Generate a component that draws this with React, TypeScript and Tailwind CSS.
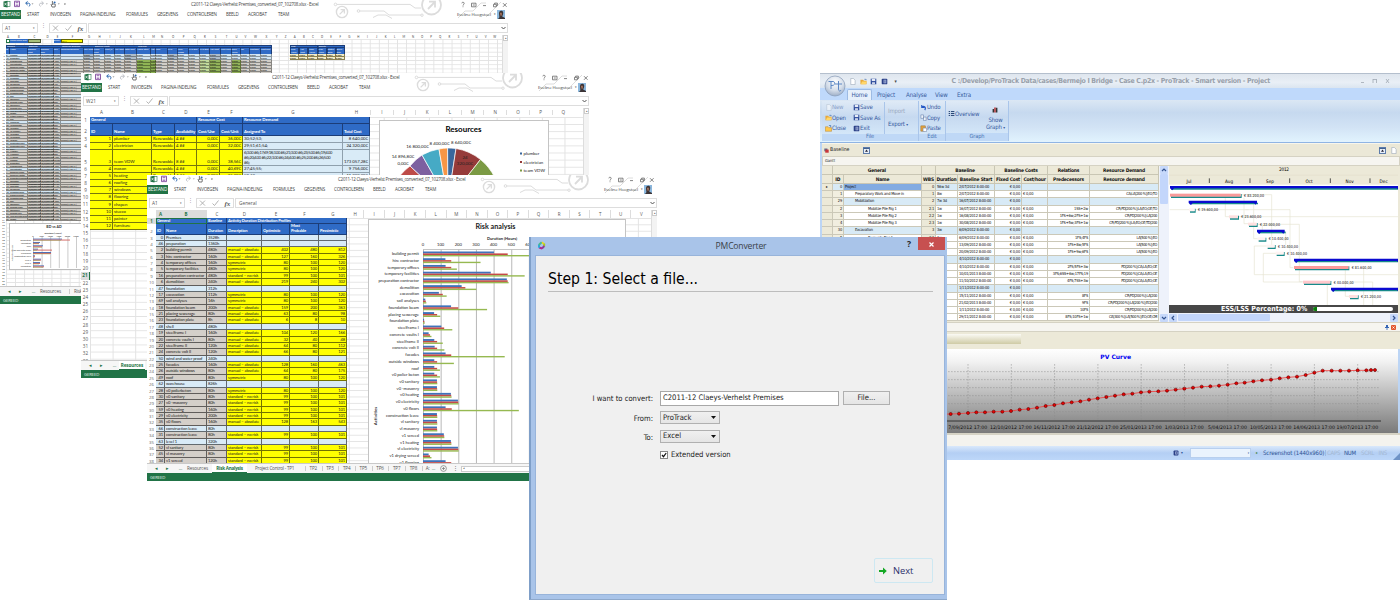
import React from "react";
import clsx from "clsx";

/* ------------------------------------------------------------------ */
/* Shared project data                                                 */
/* ------------------------------------------------------------------ */

type Activity = [id: string, name: string, hours: string, kind?: string, a?: string, b?: string, c?: string];

const ACTIVITIES: Activity[] = [
  ["0", "Premises", "3528h"],
  ["46", "preparation", "1360h"],
  ["2", "building permit", "480h", "manual – absolute", "402", "480", "812"],
  ["3", "hire contractor", "160h", "manual – absolute", "127", "160", "326"],
  ["4", "temporary offices", "160h", "symmetric", "80", "100", "120"],
  ["5", "temporary facilities", "480h", "symmetric", "80", "100", "120"],
  ["16", "preparation contractor", "480h", "standard – no risk", "99", "100", "101"],
  ["6", "demolition", "240h", "manual – absolute", "219", "240", "302"],
  ["47", "foundation", "312h"],
  ["17", "excavation", "112h", "symmetric", "80", "100", "120"],
  ["69", "soil analyses", "16h", "symmetric", "80", "100", "120"],
  ["18", "foundation beam", "200h", "manual – absolute", "159", "200", "363"],
  ["21", "placing sewerage", "80h", "manual – absolute", "63", "80", "98"],
  ["23", "foundation plate", "8h", "manual – absolute", "6", "8", "10"],
  ["48", "shell", "480h"],
  ["19", "steelframe I", "160h", "manual – absolute", "104", "120", "166"],
  ["20", "concrete vaults I", "80h", "manual – absolute", "32", "40", "48"],
  ["22", "steelframe II", "120h", "manual – absolute", "64", "80", "112"],
  ["24", "concrete volt II", "120h", "manual – absolute", "66", "80", "121"],
  ["50", "wind and water proof", "240h"],
  ["25", "facades", "160h", "manual – absolute", "128", "160", "463"],
  ["26", "outside windows", "80h", "manual – absolute", "64", "80", "175"],
  ["49", "roof", "80h", "symmetric", "80", "100", "120"],
  ["62", "warehouse", "826h"],
  ["28", "v0 polierbeton", "80h", "symmetric", "80", "100", "120"],
  ["30", "v0 sanitary", "80h", "standard – no risk", "99", "100", "101"],
  ["27", "v0 -masonry", "80h", "standard – no risk", "99", "100", "101"],
  ["59", "v0 heating", "160h", "standard – no risk", "99", "100", "101"],
  ["29", "v0 electricity", "200h", "standard – no risk", "99", "100", "101"],
  ["35", "v0 floors", "160h", "manual – absolute", "128", "163", "543"],
  ["66", "construction leave", "80h"],
  ["31", "construction leave", "80h", "standard – no risk", "99", "100", "101"],
  ["63", "level 1", "320h"],
  ["52", "vl sanitary", "80h", "standard – no risk", "99", "100", "101"],
  ["45", "vl masonry", "80h", "standard – no risk", "99", "100", "101"],
  ["34", "v1 screed", "120h", "standard – no risk", "99", "100", "101"],
];

const RISK_BARS: [string, number, number, number][] = [
  ["building permit", 402, 480, 812],
  ["hire contractor", 127, 160, 326],
  ["temporary offices", 128, 160, 192],
  ["temporary facilities", 384, 480, 576],
  ["preparation contractor", 475, 480, 485],
  ["demolition", 219, 240, 302],
  ["excavation", 90, 112, 134],
  ["soil analyses", 13, 16, 19],
  ["foundation beam", 159, 200, 363],
  ["placing sewerage", 63, 80, 98],
  ["foundation plate", 6, 8, 10],
  ["steelframe I", 104, 120, 166],
  ["concrete vaults I", 32, 40, 48],
  ["steelframe II", 64, 80, 112],
  ["concrete volt II", 66, 80, 121],
  ["facades", 128, 160, 463],
  ["outside windows", 64, 80, 175],
  ["roof", 64, 80, 96],
  ["v0 polier beton", 64, 80, 96],
  ["v0 sanitary", 79, 80, 81],
  ["v0 -masonry", 79, 80, 81],
  ["v0 heating", 158, 160, 162],
  ["v0 electricity", 198, 200, 202],
  ["v0 floors", 128, 163, 543],
  ["construction leave", 79, 80, 81],
  ["vl sanitary", 79, 80, 81],
  ["vl masonry", 79, 80, 81],
  ["v1 screed", 118, 120, 121],
  ["v1 heating", 158, 160, 161],
  ["vl electricity", 198, 200, 202],
  ["v1 drying screed", 32, 40, 48],
  ["v1 flooring", 128, 160, 200],
];

/* ------------------------------------------------------------------ */
/* Excel window chrome                                                 */
/* ------------------------------------------------------------------ */

function QuickAccess() {
  return (
    <svg className="h-[9px] w-[70px] shrink-0" viewBox="0 0 70 9" fill="none">
      <rect x="6" y="1.6" width="4" height="5" fill="#fff" stroke="#217346" strokeWidth=".6" />
      <path d="M3.5 1.5 7.5.8v6.6l-4-.7z" fill="#217346" />
      <path d="m4.5 2.8 2 2.6m0-2.6-2 2.6" stroke="#fff" strokeWidth=".7" />
      <path d="M14.5 1.2h5v5.4h-5z" stroke="#80499c" strokeWidth=".9" />
      <path d="M15.6 1.2h2.8v2h-2.8zM15.6 4.6h2.8v2h-2.8z" fill="#a77fbd" />
      <path d="M26 3.2h2.6c1.6 0 2 2.6.2 3.2M27.6 1.4 25.6 3.2l2 1.800" stroke="#2f6ab0" strokeWidth="1" />
      <path d="m31.5 3.6 1 1 1-1z" fill="#777" />
      <path d="M43 3.2h-2.200c-1.600 0-2 2.600-.2 3.200M41.600 1.400l2 1.800-2 1.800" stroke="#b5b9bf" strokeWidth=".9" />
      <path d="m45.800 3.600 1 1 1-1z" fill="#999" />
      <path d="M52.400 1v4M51 4l1 3h3l.4-2.600-2.600-.6" stroke="#666" strokeWidth=".9" />
      <circle cx="54.600" cy="2.400" r="1" fill="#2f6ab0" />
      <path d="m57.800 3.600 1 1 1-1zM64 4l.9 1 .9-1zM64 3h1.800v.4H64z" fill="#777" />
    </svg>
  );
}

function Circuit() {
  return (
    <svg className="pointer-events-none absolute left-[330px] top-0 h-[19px] w-[178px]" viewBox="0 0 178 19" fill="none" stroke="#dcdcdc" strokeWidth="1">
      <circle cx="5.500" cy="4.400" r="1.300" />
      <path d="M7 4.400h73l5 3.600h6" />
      <circle cx="28.500" cy="11" r="1.300" />
      <path d="M30 11h24l5 4h32M43 17.500l5-2.500h8l6 3.500" />
      <circle cx="12" cy="12" r="5.600" strokeWidth="1.400" />
      <path d="m9.600 14.400 4.600-4.600M10.600 9.600h3.800v3.800" strokeWidth="1.300" />
      <circle cx="101.500" cy="5" r="9.500" strokeWidth="1.800" />
      <path d="m98 9 6.800-7M99 1.600h6v6" strokeWidth="1.800" />
      <path d="m128 18 7-7h8l8-8h5M156 17 171 2" />
      <circle cx="92" cy="15.200" r="1.200" />
    </svg>
  );
}

function Avatar() {
  return (
    <svg className="h-[9px] w-[8px] shrink-0" viewBox="0 0 8 9">
      <rect width="8" height="9" fill="#8db8dd" />
      <path d="M2 3.400C2 1.200 3.400.6 4.600.8 6.400 1 6.400 3 6 4.400L5.200 6.400 8 8v1H1l1.400-1.800z" fill="#3c3436" />
      <path d="M2.800 2.800h2v2.400l-1 1z" fill="#a9745c" />
    </svg>
  );
}

const RIBBON_TABS = ["START", "INVOEGEN", "PAGINA-INDELING", "FORMULES", "GEGEVENS", "CONTROLEREN", "BEELD", "ACROBAT", "TEAM"];

function ExcelChrome({ cell, value }: { cell: string; value?: string }) {
  return (
    <div className="relative h-[35px] shrink-0 whitespace-nowrap">
      <Circuit />
      <div className="relative flex h-[9px] items-center">
        <QuickAccess />
        <span className="ml-[121px] w-[270px] text-[4.500px] tracking-[-0.260px] text-[#444]">
          C2011-12 Claeys-Verhelst Premises_converted_07_102708.xlsx - Excel
        </span>
        <svg className="h-[8px] w-[46px] shrink-0" viewBox="0 0 46 8" fill="none" stroke="#666" strokeWidth=".8">
          <path d="M.8 2.300C.8.900 3.200.900 3.200 2.400 3.200 3.400 2 3.400 2 4.600M2 5.400v.8M10.500 2.200h4.500v3.600h-4.500zM11.800 4h2M22 4.600h3M32.500 3.300h2.800v2.500h-2.800zM33.600 3.300v-1.200h2.800v2.500h-1.100M42 2.200l3.600 3.600M45.600 2.200 42 5.800" />
        </svg>
      </div>
      <div className="relative flex h-[10px] items-center text-[4.500px] text-[#444]">
        <div className="grid shrink-0 grid-cols-[27px_23px_30px_46px_31px_30px_39px_22px_30px_179px] items-center">
          <span className="flex h-[9px] w-[21px] items-center justify-center bg-[#217346] text-[4.500px] tracking-[-0.100px] text-white">BESTAND</span>
          {RIBBON_TABS.map((t) => (
            <span key={t} className="tracking-[-0.200px]">{t}</span>
          ))}
        </div>
        <span className="w-[35px] shrink-0 text-[4.300px] tracking-[-0.100px]">Eveline Hoogstoel</span>
        <span className="w-[5px] shrink-0 text-center text-[3px]">▾</span>
        <Avatar />
      </div>
      <div className="mt-[4px] flex h-[10px] text-[4.800px] text-[#555]">
        <div className="ml-[2px] flex w-[36px] items-center justify-between border border-[#ddd] px-[2px]">
          <span>{cell}</span>
          <span className="text-[3px]">▾</span>
        </div>
        <span className="w-[11px] text-center text-[#999]">⋮</span>
        <div className="flex w-[38px] items-center border border-[#ddd]">
          <svg className="h-[8px] w-[36px]" viewBox="0 0 36 8" fill="none" stroke="#aaa" strokeWidth=".9">
            <path d="m3 1.600 5 5m0-5-5 5M15.500 4.500l2 2 4-5" />
            <text x="27.500" y="6.500" fontSize="7" fontStyle="italic" fontWeight="700" fontFamily="Liberation Serif, serif" fill="#555" stroke="none">fx</text>
          </svg>
        </div>
        <div className="ml-[1px] flex flex-1 items-center justify-between border border-[#ddd] pl-[3px] pr-[1px]">
          <span>{value}</span>
          <svg className="h-[4px] w-[5px]" viewBox="0 0 5 4" fill="none" stroke="#555"><path d="m.5 1 2 2 2-2" /></svg>
        </div>
      </div>
    </div>
  );
}

function Sheets({ children }: { children: React.ReactNode }) {
  return (
    <div className="flex h-[10px] shrink-0 items-center overflow-hidden whitespace-nowrap border-t border-[#c9c9c9] bg-[#f6f6f6] text-[4.600px] tracking-[-0.120px] text-[#555]">
      <span className="w-[10px] shrink-0 pl-[8px] text-[5px] text-[#217346]">◂</span>
      <span className="w-[20px] shrink-0 pl-[9px] text-[5px] text-[#217346]">▸</span>
      <span className="w-[7px] shrink-0 text-center text-[#217346]">…</span>
      {children}
    </div>
  );
}

function Ready() {
  return <div className="flex h-[8px] shrink-0 items-center bg-[#217346] pl-[3px] text-[4.300px] tracking-[-0.150px] text-[#e4f2ea]">GEREED</div>;
}

function VScroll() {
  return (
    <div className="w-[6px] shrink-0 border-l border-[#ddd] bg-[#f3f3f3]">
      <div className="flex h-[6px] items-center justify-center border border-[#ccc] bg-white text-[3px] leading-none text-[#666]">▴</div>
    </div>
  );
}

/* ------------------------------------------------------------------ */
/* Window 1: schedule overview                                         */
/* ------------------------------------------------------------------ */

const GROUP_ROWS = [0, 1, 8, 14, 19, 23, 30, 32, 39, 47];
const OVERVIEW_COLS =
  "grid grid-cols-[4px_18px_13px_13px_7px_23px_10px_11px_10px_10px_12px_14px_5px_12px_10px_11px_11px_10px_11px_11px_9px_9px_11px_11px]";
const OVERVIEW_HEAD = [
  "ID", "Name", "Baseline Start", "Baseline End", "Dur", "Resource Demand", "Res. Cost", "Fixed Cost", "Cost /h", "Var. Cost",
  "Total Cost", "Actual Start", "Act", "PRC", "PAC", "Perc. Comp", "PAC Dev", "PAC Dev", "Act. Cost", "Plan Value",
  "Earn. Value", "Trk", "Cost Dev", "Cost PRC",
];

function overviewTone(col: number, group: boolean) {
  if (group) return col > 5 && col < 22 && col % 4 === 2 ? "bg-[#aebdca]" : "bg-[#d3e6f3]";
  if (col === 11 || col === 12) return "bg-[#8fb455]";
  if (col === 17) return "bg-[#c2d99b]";
  if (col === 18 || col === 20) return "bg-[#93b25a]";
  return "bg-[#d2cec8]";
}

function overviewText(row: number, col: number) {
  const a = ACTIVITIES[row % ACTIVITIES.length];
  if (col === 0) return a[0];
  if (col === 1) return a[1];
  if (col === 2) return "23/05/2011 7:00";
  if (col === 3) return "26/12/2012 16:00";
  if (col === 4) return a[2];
  if (col === 5) return row % 3 !== 1 && a[3] ? "mason[2,00 #4]" : "";
  if (row > 8) return "";
  return "0,00€";
}

function OverviewChart() {
  const bars: [string, number, number][] = [
    ["preparation", 29, 37], ["foundation", 7, 6], ["shell", 10, 9], ["wind and water proof", 5, 19], ["warehouse", 18, 18],
    ["construction leave", 2, 2], ["level 1", 8, 8], ["level 2", 7, 7], ["completion", 11, 11],
  ];
  return (
    <svg className="h-[47px] w-[73px]" viewBox="0 0 73 47" fontFamily="Lato, sans-serif" fill="#333">
      <rect x=".5" y=".5" width="80" height="46" fill="#fff" stroke="#bbb" />
      <text x="45" y="5" fontSize="3.600" fontWeight="700" textAnchor="middle">BD vs AD</text>
      <text x="44" y="10.500" fontSize="2.300" fontWeight="700" textAnchor="middle">Duration (Hours)</text>
      {[0, 1, 2, 3, 4, 5].map((i) => (
        <g key={i}>
          <path d={`M${24.500 + i * 8.600} 14v31`} stroke="#999" strokeWidth=".5" />
          <text x={24 + i * 8.600} y="13.500" fontSize="2.300" textAnchor="middle">{i * 500}</text>
        </g>
      ))}
      <text x="0" y="0" fontSize="2.400" textAnchor="middle" transform="translate(4 30) rotate(-90)">Activity Groups</text>
      {bars.map(([n, b, r], i) => (
        <g key={n}>
          <text x="22" y={17.600 + i * 3.350} fontSize="2.100" textAnchor="end">{n}</text>
          <rect x="24" y={15.600 + i * 3.350} width={b} height="1" fill="#4f6fb5" />
          <rect x="24" y={16.600 + i * 3.350} width={r} height=".9" fill="#d0605c" />
          <rect x="24" y={17.400 + i * 3.350} width={b - 1} height=".4" fill="#8aa84e" />
        </g>
      ))}
    </svg>
  );
}

function OverviewWindow() {
  return (
    <div className="absolute left-0 top-0 flex h-[304px] w-[508px] flex-col bg-white">
      <ExcelChrome cell="A1" />
      <div className="flex min-h-0 flex-1 [font-family:'Lato',sans-serif]">
        <div className="flex w-[6px] shrink-0 flex-col overflow-hidden pt-[18px] text-right text-[2.400px] leading-[2.930px] text-[#444]">
          {Array.from({ length: 80 }, (_, i) => (
            <span key={i} className="h-[2.930px] shrink-0 pr-[1px]">{i + 4}</span>
          ))}
        </div>
        <div className="flex min-w-0 flex-1 flex-col overflow-hidden bg-[linear-gradient(to_right,#e3e3e3_1px,transparent_1px),linear-gradient(to_bottom,#e3e3e3_1px,transparent_1px)] bg-[size:9.100px_4.200px]">
          <div className="flex h-[4px] shrink-0 bg-white text-center text-[2.800px] leading-[4px] text-[#444]">
            <div className={clsx(OVERVIEW_COLS, "w-[266px] shrink-0")}>
              {"ABCDEFGHIJKLMNOPQRSTUVWX".split("").map((c) => <span key={c}>{c}</span>)}
            </div>
            <div className="grid grid-cols-[repeat(25,9.100px)]">
              {"YZABCDEFGHIJKLMNOPQRSTUVW".split("").map((c, i) => <span key={i}>{c}</span>)}
            </div>
          </div>
          <div className="flex h-[4px] shrink-0 whitespace-nowrap text-[2.200px] leading-[3.500px]">
            <span className="w-[4px] border border-[#217346] bg-white" />
            <span className="w-[18px] bg-[#2f6bc6] text-[2px] text-white">Project Status Date</span>
            <span className="w-[13px] border border-[#4d5a36] bg-[#a8c07b]" />
            <span className="w-[13px]" />
            <span className="w-[7px] bg-[#2f6bc6] text-white">Name</span>
            <span className="w-[22px] border border-[#666600] bg-[#ffff00] leading-[2px]">TP11</span>
          </div>
          <div className="mt-[2px] flex items-start">
            <div className="w-[266px] shrink-0">
              <div className="flex h-[3px] border border-[#1c3d78] bg-[#2f6bc6] text-[2.300px] leading-[1.500px] text-white">
                <span className="w-[22px]">General</span>
                <span className="w-[33px]">Baseline</span>
                <span className="w-[33px]">Resource Demand</span>
                <span className="w-[43px]">Baseline Costs</span>
                <span>Tracking</span>
              </div>
              <div className={clsx(OVERVIEW_COLS, "h-[6px] bg-[#2f6bc6]")}>
                {OVERVIEW_HEAD.map((h, i) => (
                  <span key={i} className="border-r border-[#1c3d78] text-[2.300px] leading-[2.900px] tracking-[-0.050px] text-white">{h}</span>
                ))}
              </div>
              <div className={clsx(OVERVIEW_COLS, "auto-rows-[2.930px]")}>
                {Array.from({ length: 57 }, (_, r) =>
                  OVERVIEW_HEAD.map((_, c) => (
                    <span
                      key={`${r}-${c}`}
                      className={clsx(
                        "whitespace-nowrap border-b border-black/35 text-[2.300px] leading-[2.300px] text-[#111]",
                        c > 0 && "border-r",
                        (c === 2 || c === 3) && "font-bold tracking-[-0.350px]",
                        c === 1 && "tracking-[-0.220px]",
                        c === 4 && "tracking-[-0.100px]",
                        overviewTone(c, GROUP_ROWS.includes(r)),
                      )}
                    >
                      {overviewText(r, c)}
                    </span>
                  )),
                )}
              </div>
              <div className="ml-[3px] mt-[2px]">
                <OverviewChart />
              </div>
            </div>
            <div className="ml-[18px] grid w-[55px] grid-cols-6 text-[2.300px] leading-[2.700px]">
              <span className="col-span-3 h-[3px] border border-[#1c3d78] bg-[#2f6bc6] leading-[1.500px] text-white">Sum</span>
              <span className="col-span-3 h-[3px] border border-[#1c3d78] bg-[#2f6bc6] leading-[1.500px] text-white">Results</span>
              {["Plan Value", "Act. Cost", "Earn Value", "Plan Value", "Status Date", "Dura- tion"].map((h, i) => (
                <span key={i} className="h-[6px] border-x border-[#1c3d78] bg-[#2f6bc6] text-white">{h}</span>
              ))}
              {Array.from({ length: 12 }, (_, i) => (
                <span key={i} className="h-[3px] border-b border-r border-[#8a8050] bg-[#f4ecc6] leading-[2.300px]">0,00€</span>
              ))}
            </div>
          </div>
        </div>
        <VScroll />
      </div>
      <Sheets>
        <span className="ml-[3px] w-[29px] shrink-0">Resources</span>
        <span className="shrink-0 border-l border-[#ccc] pl-[4px]">Risk Analysis</span>
      </Sheets>
      <Ready />
    </div>
  );
}

/* ------------------------------------------------------------------ */
/* Window 2: resources                                                 */
/* ------------------------------------------------------------------ */

const RES_COLS = "grid grid-cols-[23px_39px_23px_22px_23px_23px_100px_27px]";

const RESOURCES: [string, string, string, string, string, string, string][] = [
  ["1", "plumber", "4 ##", "0,00€", "36,00€", "30;52;53;", "8 640,00€"],
  ["2", "electrician", "4 ##", "0,00€", "32,00€", "29;51;61;54;", "24 320,00€"],
  ["3", "team VDW", "8 ##", "0,00€", "38,56€", "", "173 057,28€"],
  ["4", "mason", "4 ##", "0,00€", "40,69€", "27;45;55;", "9 756,00€"],
  ["5", "heating", "4 ##", "0,00€", "35,00€", "59;60;", "11 200,00€"],
  ["6", "roofing", "4 ##", "0,00€", "35,00€", "49;", "8 400,00€"],
  ["7", "windows", "4 ##", "0,00€", "35,00€", "26;", "8 400,00€"],
  ["8", "flooring", "4 ##", "0,00€", "35,00€", "35;", "8 400,00€"],
  ["9", "chapen", "4 ##", "0,00€", "35,00€", "34;", "8 400,00€"],
  ["10", "stucco", "4 ##", "0,00€", "35,00€", "36;", "8 400,00€"],
  ["11", "painter", "4 ##", "0,00€", "35,00€", "37;", "8 400,00€"],
  ["12", "furniture", "4 ##", "0,00€", "35,00€", "38;", "8 400,00€"],
];

function ResourceChart() {
  const cx = 69;
  const cy = 81;
  const pts: [number, number][] = [[15, 81], [21.500, 55], [31, 46], [43, 35], [60, 29], [68.600, 28], [77, 28.500], [101.500, 39.500], [121, 81]];
  const fills = ["#be4b48", "#be4b48", "#7d60a0", "#46aac5", "#f79646", "#3a679c", "#963b3a", "#7b9a44"];
  const label = (x: number, y: number, t: string) => (
    <text key={t + x} x={x} y={y} fontSize="4.400" textAnchor="middle" fill="#222">{t}</text>
  );
  return (
    <svg className="h-[160px] w-[170px] shrink-0" viewBox="0 0 170 160" fontFamily="Lato, sans-serif">
      <rect x=".5" y=".5" width="169" height="159" fill="#fff" stroke="#c4c4c4" />
      <text x="84.500" y="12" fontSize="7.600" fontWeight="700" textAnchor="middle" textLength="36" lengthAdjust="spacingAndGlyphs">Resources</text>
      {fills.map((f, i) => (
        <path key={i} d={`M${cx} ${cy}L${pts[i][0]} ${pts[i][1]}A53 53 0 0 1 ${pts[i + 1][0]} ${pts[i + 1][1]}Z`} fill={f} stroke="#fff" strokeWidth=".7" />
      ))}
      {label(38.500, 28, "16 800,00€")}
      {label(24, 38, "14 896,80€")}
      {label(24, 45, "0,00€")}
      {label(60.500, 25.200, "8 400,00€")}
      {label(82, 24.200, "8 640,00€")}
      {label(86, 39, "24")}
      {label(86, 45, "320,00€")}
      {[["#3a679c", "plumber"], ["#963b3a", "electrician"], ["#7b9a44", "team VDW"]].map(([c, t], i) => (
        <g key={t}>
          <rect x="141" y={32.500 + i * 8.500} width="2" height="2" fill={c} />
          <text x="144.500" y={35.200 + i * 8.500} fontSize="4.400" fill="#222">{t}</text>
        </g>
      ))}
    </svg>
  );
}

function ResourceWindow() {
  const y = "overflow-hidden whitespace-nowrap border-b border-r border-[#77770c] bg-[#ffff00] px-[1px]";
  const b = "overflow-hidden border-b border-r border-[#8fa0ad] bg-[#d9ebf7] px-[1px]";
  const h = "overflow-hidden whitespace-nowrap border-b border-r border-[#1c3d78] bg-[#2f6bc6] pl-[1px] font-bold text-white";
  return (
    <div className="absolute left-[81px] top-[73px] flex h-[305px] w-[508px] flex-col bg-white">
      <ExcelChrome cell="W21" />
      <div className="flex min-h-0 flex-1">
        <div className="flex w-[9px] shrink-0 flex-col overflow-hidden text-center text-[4.600px] text-[#555]">
          <span className="h-[9px] shrink-0" />
          <span className="h-[7px] shrink-0 leading-[7px]">1</span>
          <span className="h-[12px] shrink-0 leading-[15px]">2</span>
          <span className="h-[7px] shrink-0 leading-[7px]">3</span>
          <span className="h-[7px] shrink-0 leading-[7px]">4</span>
          <span className="h-[16px] shrink-0 leading-[25px]">5</span>
          {Array.from({ length: 28 }, (_, i) => (
            <span key={i} className={clsx("h-[7.100px] shrink-0 leading-[7px]", i === 15 && "border-r border-[#217346] bg-[#dcdcdc] font-bold text-[#217346]")}>{i + 6}</span>
          ))}
        </div>
        <div className="min-w-0 flex-1 overflow-hidden">
          <div className="flex h-[9px] items-center text-[4.600px] text-[#555]">
            <div className={clsx(RES_COLS, "w-[280px] text-center")}>
              {"ABCDEFGH".split("").map((c) => <span key={c}>{c}</span>)}
            </div>
            <div className="grid grid-cols-[repeat(9,22.700px)] text-center">
              {"IJKLMNOPQ".split("").map((c) => <span key={c} className="border-l border-[#ddd]">{c}</span>)}
            </div>
          </div>
          <div className="flex h-[249px] items-start bg-[linear-gradient(to_right,#e3e3e3_1px,transparent_1px),linear-gradient(to_bottom,#e3e3e3_1px,transparent_1px)] bg-[size:22.600px_7.120px]">
            <div className={clsx(RES_COLS, "w-[280px] shrink-0 grid-rows-[7px_12px_7px_7px_16px] auto-rows-[7.100px] text-[4.300px] leading-[6px] tracking-[-0.040px] text-[#222] [font-family:'Lato',sans-serif]")}>
              <span className={clsx(h, "col-span-4")}>General</span>
              <span className={clsx(h, "col-span-2")}>Resource Cost</span>
              <span className={clsx(h, "col-span-2")}>Resource Demand</span>
              {["ID", "Name", "Type", "Availability", "Cost/Use", "Cost/Unit", "Assigned To", "Total Cost"].map((t) => (
                <span key={t} className={clsx(h, "flex items-end tracking-[-0.160px]")}>{t}</span>
              ))}
              {RESOURCES.map(([id, name, av, use, unit, to, total]) => (
                <React.Fragment key={id}>
                  <span className={clsx(y, "flex items-end justify-end")}>{id}</span>
                  <span className={clsx(y, "flex items-end")}>{name}</span>
                  <span className={clsx(y, "flex items-end")}>Renewable</span>
                  <span className={clsx(y, "flex items-end")}>{av}</span>
                  <span className={clsx(y, "flex items-end justify-end")}>{use}</span>
                  <span className={clsx(y, "flex items-end justify-end")}>{unit}</span>
                  {id === "3" ? (
                    <span className={clsx(b, "whitespace-nowrap text-[4px] leading-[5.200px] tracking-[-0.360px]")}>
                      6[3.00 #6];17;69;18[3.00 #6];21[3.00 #6];23[5.00 #6];19[4.00
                      <br />
                      #6];20[4.00 #6];22[3.00 #6];24[4.00 #6];25[2.00 #6];26[5.00
                      <br />
                      #6];
                    </span>
                  ) : (
                    <span className={b}>{to}</span>
                  )}
                  <span className={clsx(b, "flex items-end justify-end whitespace-nowrap")}>{total}</span>
                </React.Fragment>
              ))}
            </div>
            <div className="ml-[9px] mt-[3px]">
              <ResourceChart />
            </div>
          </div>
        </div>
        <VScroll />
      </div>
      <Sheets>
        <span className="ml-[1px] flex h-[9px] w-[26px] shrink-0 items-center justify-center border-b border-[#217346] bg-white text-[4.600px] font-bold text-[#217346]">Resources</span>
      </Sheets>
      <Ready />
    </div>
  );
}

/* ------------------------------------------------------------------ */
/* Window 3: risk analysis                                             */
/* ------------------------------------------------------------------ */

const RISK_COLS = "grid grid-cols-[9px_42px_20px_35px_28px_29px_28px]";

function RiskChart() {
  const x0 = 55;
  const k = 0.1765;
  return (
    <svg className="h-[245px] w-[258px] shrink-0" viewBox="0 0 258 245" fontFamily="Lato, sans-serif" fill="#222">
      <rect x=".5" y=".5" width="257" height="250" fill="#fff" stroke="#c4c4c4" />
      <text x="127.500" y="9.500" fontSize="7" fontWeight="700" textAnchor="middle" textLength="40" lengthAdjust="spacingAndGlyphs">Risk analysis</text>
      <text x="134" y="21" fontSize="4.200" fontWeight="700" textAnchor="middle" textLength="30" lengthAdjust="spacingAndGlyphs">Duration (Hours)</text>
      {Array.from({ length: 12 }, (_, i) => (
        <g key={i}>
          <path d={`M${x0 + i * 17.650 + 0.500} 30.500v215`} stroke="#b0b0b0" strokeWidth=".9" />
          <text x={x0 + i * 17.650} y="27.200" fontSize="4.200" textAnchor="middle">{i * 100}</text>
        </g>
      ))}
      <path d="M55 30.500h200" stroke="#b7b7b7" strokeWidth=".8" />
      <text fontSize="4.400" fontWeight="700" textAnchor="middle" transform="translate(9 197) rotate(-90)">Activities</text>
      {RISK_BARS.map(([n, a, b, c], i) => {
        const y = 34.800 + i * 6.733;
        return (
          <g key={n + i}>
            <text x="51" y={y + 1.300} fontSize="4.100" textAnchor="end">{n}</text>
            <rect x={x0} y={y - 2.300} width={a * k} height="1.900" fill="#3f73ba" />
            <rect x={x0} y={y - 0.400} width={b * k} height="1.600" fill="#c64b47" />
            <rect x={x0} y={y + 1.200} width={c * k} height="1.400" fill="#96b951" />
          </g>
        );
      })}
    </svg>
  );
}

function RiskWindow() {
  const h = "overflow-hidden whitespace-nowrap border-b border-r border-[#1c3d78] bg-[#2f6bc6] pl-[1px] font-bold tracking-[-0.160px] text-white";
  const c = "overflow-hidden whitespace-nowrap border-b border-r border-black/55 px-[1px]";
  return (
    <div className="absolute left-[147px] top-[175px] flex h-[306px] w-[510px] flex-col bg-white">
      <ExcelChrome cell="A1" value="General" />
      <div className="flex min-h-0 flex-1">
        <div className="flex w-[9px] shrink-0 flex-col overflow-hidden text-center text-[4.300px] text-[#666]">
          <span className="h-[8px] shrink-0" />
          <span className="h-[6px] shrink-0 bg-[#dcdcdc] font-bold leading-[6px] text-[#217346]">1</span>
          <span className="h-[10.500px] shrink-0 leading-[14px]">2</span>
          {Array.from({ length: 36 }, (_, i) => (
            <span key={i} className="h-[6.386px] shrink-0 leading-[6.386px]">{i + 3}</span>
          ))}
        </div>
        <div className="min-w-0 flex-1 overflow-hidden">
          <div className="flex h-[8px] items-center text-[4.500px] leading-[8px] text-[#555]">
            <div className={clsx(RISK_COLS, "w-[191px] text-center")}>
              {"ABCDEFG".split("").map((l, i) => (
                <span key={l} className={i < 2 ? "bg-[#dcdcdc] font-bold text-[#217346]" : ""}>{l}</span>
              ))}
            </div>
            <span className="w-[21px] text-center">H</span>
            <div className="grid grid-cols-[repeat(14,20.550px)] text-center">
              {"IJKLMNOPQRSTUV".split("").map((l) => <span key={l} className="border-l border-[#ddd]">{l}</span>)}
            </div>
          </div>
          <div className="flex h-[246px] items-start bg-[linear-gradient(to_right,#e3e3e3_1px,transparent_1px),linear-gradient(to_bottom,#e3e3e3_1px,transparent_1px)] bg-[size:24.100px_6.386px]">
            <div className={clsx(RISK_COLS, "w-[191px] shrink-0 grid-rows-[6px_10.500px] auto-rows-[6.386px] text-[4.100px] leading-[5.600px] tracking-[-0.100px] text-[#1a1a1a] [font-family:'Lato',sans-serif]")}>
              <span className={clsx(h, "col-span-2 outline outline-1 -outline-offset-1 outline-[#217346]")}>General</span>
              <span className={h}>Baseline</span>
              <span className={clsx(h, "col-span-4")}>Activity Duration Distribution Profiles</span>
              {["ID", "Name", "Duration", "Description", "Optimistic", "Most Probable", "Pessimistic"].map((t) => (
                <span key={t} className={clsx(h, "flex items-end")}>
                  {t === "Most Probable" ? <span className="leading-[4.600px]">Most<br />Probable</span> : t}
                </span>
              ))}
              {ACTIVITIES.map(([id, name, hours, kind, p, q, r]) => {
                const left = kind ? "bg-[#d4cfc9]" : "bg-[#d9ebf7]";
                const right = kind ? "bg-[#ffff00]" : "bg-[#d9ebf7]";
                return (
                  <React.Fragment key={id}>
                    <span className={clsx(c, left, "text-right")}>{id}</span>
                    <span className={clsx(c, left)}>{name}</span>
                    <span className={clsx(c, left)}>{hours}</span>
                    <span className={clsx(c, right)}>{kind}</span>
                    <span className={clsx(c, right, "text-right")}>{p}</span>
                    <span className={clsx(c, right, "text-right")}>{q}</span>
                    <span className={clsx(c, right, "text-right")}>{r}</span>
                  </React.Fragment>
                );
              })}
            </div>
            <div className="ml-[21px] mt-px">
              <RiskChart />
            </div>
          </div>
        </div>
        <VScroll />
      </div>
      <Sheets>
        <span className="ml-[3px] w-[25px] shrink-0">Resources</span>
        <span className="flex h-[9px] w-[35px] shrink-0 items-center justify-center border-b border-[#217346] bg-white text-[4.600px] font-bold tracking-[-0.240px] text-[#217346]">Risk Analysis</span>
        <span className="w-[58px] shrink-0 pl-[8px] tracking-[-0.220px]">Project Control - TP1</span>
        {["TP2", "TP3", "TP4", "TP5", "TP6", "TP7", "TP8"].map((t) => (
          <span key={t} className="w-[16.700px] shrink-0 border-l border-[#ccc] pl-[3.500px]">{t}</span>
        ))}
        <span className="w-[10px] shrink-0 border-l border-[#ccc] pl-[3px]">A:</span>
        <span className="w-[6px] shrink-0 text-[#217346]">…</span>
        <svg className="ml-[2px] h-[7px] w-[7px] shrink-0" viewBox="0 0 7 7" fill="none" stroke="#777" strokeWidth=".7"><circle cx="3.500" cy="3.500" r="2.900" /><path d="M3.500 2v3M2 3.500h3" /></svg>
        <span className="ml-[6px] w-[2px] shrink-0">⋮</span>
        <span className="ml-[6px] flex h-[6px] w-[80px] shrink-0 items-center border border-[#ccc] bg-white pl-[1px] text-[3px]">◂</span>
      </Sheets>
      <Ready />
    </div>
  );
}

/* ------------------------------------------------------------------ */
/* ProTrack window                                                     */
/* ------------------------------------------------------------------ */

type Task = [string, string, string, string, string, string, string, string];

const TASKS: Task[] = [
  ["0", "Project", "0", "56w 3d", "2/07/2012 8:00:00", "", "", ""],
  ["1", "Preparatory Work and Move in", "1", "8w", "2/07/2012 8:00:00", "€ 0,00", "", "CA;LA[200 %];EO;TO"],
  ["29", "Mobilization", "2", "7w 3d", "16/07/2012 8:00:00", "", "", ""],
  ["2", "Mobilize Pile Rig 1", "2.1", "1w", "16/07/2012 8:00:00", "€ 0,00", "1SS+2w", "CR;PD[200 %];LA;EO;OE;TO"],
  ["3", "Mobilize Pile Rig 2", "2.2", "1w", "16/08/2012 8:00:00", "€ 0,00", "1FS+6w;2FS+1w", "CR;PD[200 %];LA[200"],
  ["4", "Mobilize Pile Rig 3", "2.3", "1w", "30/08/2012 8:00:00", "€ 0,00", "1FS+5w;3FS+1w", "CR;PD[200 %];LA;EO;OE;TD[200"],
  ["30", "Excavation", "3", "3w", "6/09/2012 8:00:00", "", "", ""],
  ["5", "Excavate Pier 1", "3.1", "1w", "6/09/2012 8:00:00", "€ 0,00", "1FS;4FS", "LA[500 %];EO"],
  ["6", "Excavate Pier 2", "3.2", "1w", "13/09/2012 8:00:00", "€ 0,00", "1FS+8w;5FS", "LA[500 %];EO"],
  ["7", "Excavate Pier 3", "3.3", "1w", "20/09/2012 8:00:00", "€ 0,00", "1FS+9w;6FS", "LA[500 %];EO"],
  ["31", "Piles", "4", "25w", "4/10/2012 8:00:00", "", "", ""],
  ["8", "Drive Piles 1", "4.1", "6w", "4/10/2012 8:00:00", "€ 0,00", "2FS;5FS+3w", "PD[200 %];CA;LA;EO;OE"],
  ["9", "Drive Piles 2", "4.2", "6w", "10/01/2013 8:00:00", "€ 0,00", "3FS;6SS+6w;17FS;19", "PD[200 %];CA;LA;EO;OE"],
  ["10", "Drive Piles 3", "4.3", "3w", "11/10/2012 8:00:00", "€ 0,00", "4FS;7SS+3w", "PD[200 %];CA;LA;EO;OE"],
  ["32", "Foundation", "5", "20w", "1/11/2012 8:00:00", "", "", ""],
  ["11", "Footing 1", "5.1", "1w", "15/11/2012 8:00:00", "€ 0,00", "8FS", "CR;PD[200 %];LA[200"],
  ["12", "Footing 2", "5.2", "1w", "21/02/2013 8:00:00", "€ 0,00", "9FS", "CR;PD[200 %];LA[200 %];EO[200"],
  ["13", "Footing 3", "5.3", "1w", "1/11/2012 8:00:00", "€ 0,00", "10FS", "CR;PD[200 %];LA[200"],
  ["14", "Pier 1", "5.4", "2w", "29/11/2012 8:00:00", "€ 0,00", "8FS;10FS+1w", "CA[300 %];LA[500 %];EO;OE;CM"],
];

const TASK_COLS = "grid grid-cols-[10.500px_11.500px_78px_14px_22px_37px_27px_26px_42px_69px]";

function TaskTable() {
  const head = "flex items-center justify-center overflow-hidden whitespace-nowrap border-b border-r border-[#c9c6b4] bg-[#ece9d8] text-[4.900px] font-bold";
  const cell = "overflow-hidden whitespace-nowrap border-b border-r border-[#cbc8b8] px-[1px]";
  return (
    <div className={clsx(TASK_COLS, "w-[337px] shrink-0 grid-rows-[9px_9px] auto-rows-[7.240px] content-start text-[4px] leading-[6.600px] tracking-[-0.200px] text-[#111]")}>
      {[["", 1], ["General", 2], ["", 1], ["Baseline", 2], ["Baseline Costs", 2], ["Relations", 1], ["Resource Demand", 1]].map(([t, n], i) => (
        <span key={i} className={clsx(head, n === 2 && "col-span-2")}>{t}</span>
      ))}
      {["", "ID", "Name", "WBS", "Duration", "Baseline Start", "Fixed Cost", "Cost/hour", "Predecessors", "Resource demand"].map((t, i) => (
        <span key={i} className={head}>{t}</span>
      ))}
      {TASKS.map(([id, name, wbs, dur, start, ch, pred, dem], i) => {
        const group = ch === "";
        const bg = group ? "bg-[#d8eaf6]" : "bg-white";
        return (
          <React.Fragment key={id}>
            <span className={clsx(cell, "bg-[#ece9d8] text-center")}>{i === 0 ? "▸" : ""}</span>
            <span className={clsx(cell, i === 0 ? bg : "bg-[#f1eee0]", "text-right")}>{id}</span>
            <span className={clsx(cell, i === 0 ? "bg-[#82abe2]" : bg, i > 0 && (group || i === 1 ? "pl-[11px]" : "pl-[24px]"))}>{name}</span>
            <span className={clsx(cell, "bg-[#ece9d8] text-right")}>{wbs}</span>
            <span className={clsx(cell, bg)}>{dur}</span>
            <span className={clsx(cell, bg)}>{start}</span>
            <span className={clsx(cell, bg, "text-right")}>€ 0,00</span>
            <span className={clsx(cell, bg)}>{ch}</span>
            <span className={clsx(cell, bg, "text-right")}>{pred}</span>
            <span className={clsx(cell, bg, "text-right tracking-[-0.380px]")}>{dem}</span>
          </React.Fragment>
        );
      })}
    </div>
  );
}

const MONTHS: [string, number][] = [["Jul", 267], ["Aug", 387], ["Sep", 510], ["Oct", 627], ["Nov", 749], ["Dec", 851]];

function Gantt() {
  const summary = (x: number, y: number, x2: number) => (
    <g key={`s${y}`}>
      <path d={`M${x + 3} ${y + 6}H${x2 + 3}V${y + 11}H${x + 3}z`} fill="#178a8a" />
      <path d={`M${x} ${y}H${x2}V${y + 7}H${x + 12}L${x + 7} ${y + 13}L${x} ${y + 7}z`} fill="#0a0ad0" />
      <path d={`M${x2 - 10} ${y + 6}h10l-4 6z`} fill="#0a0ad0" />
    </g>
  );
  const task = (x: number, y: number, x2: number, label: string, fill = "#ffc8cc") => (
    <g key={`t${y}`}>
      <path d={`M${x + 3} ${y + 8}H${x2}V${y + 1}h3V${y + 13}H${x + 3}z`} fill="#178a8a" />
      <rect x={x} y={y} width={x2 - x} height="9" fill={fill} />
      <text x={x2 + 10} y={y + 9} fontSize="12" textLength="60" lengthAdjust="spacingAndGlyphs" fill="#111">{label}</text>
    </g>
  );
  return (
    <svg className="h-[139px] w-[229px]" viewBox="207 305 687 417" fontFamily="DejaVu Sans Condensed, Noto Sans, sans-serif">
      <rect x="207" y="305" width="690" height="56" fill="#ece9d8" />
      <rect x="207" y="361" width="690" height="361" fill="#fff" />
      <path d="M207 332.500h690" stroke="#dedac6" strokeWidth="1.500" />
      <text x="552" y="319" fontSize="14" textAnchor="middle" textLength="30">2012</text>
      {MONTHS.map(([m, x]) => <text key={m} x={x} y="355" fontSize="14" textAnchor="middle">{m}</text>)}
      <path d="M328 342v14M450 342v14M569 342v14M691 342v14M810 342v14" stroke="#333" strokeWidth="2.500" />
      <g fill="none" stroke="#e5e4d2" strokeWidth="2">
        <path d="M424 391h91v155M209 436h361v174h10M376 400v57h14M416 457h478M432 400v78h12M461 415v108h12M487 480v22h70v40M446 436h-10M473 480h125v172h10M500 545h-37v86h431M528 567h-38v86h118M736 610v86h12M791 610v112M682 660v62M818 653v70M760 653h58" />
      </g>
      {summary(210, 365, 900)}
      {task(210, 388, 422, "€ 83.200,00", "#f99a9a")}
      {summary(266, 409, 471)}
      {task(267, 432, 284, "€ 19.600,00", "#fff3f2")}
      {task(387, 453, 414, "€ 23.600,00", "#ffe0e0")}
      {task(444, 475, 470, "€ 22.000,00", "#ffe0e0")}
      {summary(471, 496, 554)}
      {task(473, 519, 496, "€ 10.400,00", "#fff3f2")}
      {task(500, 541, 524, "€ 10.400,00", "#fff3f2")}
      {task(527, 562, 551, "€ 10.400,00", "#fff3f2")}
      {summary(582, 583, 900)}
      {task(582, 605, 745, "€ 81.600,00", "#f99a9a")}
      {task(609, 649, 691, "€ 40.000,00", "#ffc8cc")}
      {summary(693, 670, 900)}
      {task(747, 692, 773, "€ 21.200,00", "#ffe0e0")}
    </svg>
  );
}

const PV: [number, number][] = [
  [6, 568], [32, 567], [57, 566], [84, 564], [109, 562], [135, 562], [161, 560], [187, 560], [213, 558], [239, 554], [265, 552], [291, 548],
  [317, 543], [343, 540], [369, 535], [395, 532], [421, 529], [447, 524], [473, 520], [499, 516], [525, 512], [551, 508], [577, 506],
  [603, 502], [628, 500], [655, 499], [681, 497], [707, 494], [733, 491], [759, 488], [785, 485], [811, 484], [837, 482], [863, 479],
  [889, 475], [914, 473], [940, 469], [966, 466], [993, 464], [1019, 460], [1045, 457], [1071, 455], [1097, 450], [1123, 443],
  [1148, 437], [1175, 437], [1201, 437], [1227, 437], [1253, 436], [1279, 436], [1293, 435], [1305, 435],
];
const PV_DATES = ["7/09/2012 17:00", "12/10/2012 17:00", "16/11/2012 17:00", "21/12/2012 17:00", "25/01/2013 17:00", "1/03/2013 17:00", "5/04/2013 17:00", "10/05/2013 17:00", "14/06/2013 17:00", "19/07/2013 17:00"];

function PvCurve() {
  return (
    <svg className="h-[84px] w-[580px] shrink-0" viewBox="-360 372 1740 252" fontFamily="DejaVu Sans Condensed, Noto Sans, sans-serif">
      <defs>
        <linearGradient id="pv" x1="0" y1="0" x2="0" y2="1">
          <stop offset="0" stopColor="#ffffff" />
          <stop offset="0.150" stopColor="#f2f2f2" />
          <stop offset="1" stopColor="#7a7a7a" />
        </linearGradient>
      </defs>
      <rect x="-360" y="372" width="1734" height="252" fill="url(#pv)" />
      <text x="527" y="403" fontSize="18" fontWeight="700" textAnchor="middle" textLength="92" lengthAdjust="spacingAndGlyphs" fill="#0000f0">PV Curve</text>
      <g stroke="#8d8d8d" strokeWidth="1.600" strokeDasharray="5 4" fill="none">
        {[440, 464, 488, 512, 536, 560].map((y) => <path key={y} d={`M-300 ${y}H1320`} />)}
        {PV_DATES.map((d, i) => <path key={d} d={`M${84 + i * 129.900} 417V586`} />)}
      </g>
      <path d="M-300 588H1323" stroke="#333" strokeWidth="3" />
      <polyline points={PV.map((p) => p.join(",")).join(" ")} fill="none" stroke="#f04040" strokeWidth="2.500" />
      {PV.map(([x, y]) => <circle key={x} cx={x} cy={y} r="4.600" fill="#e80000" stroke="#5a0000" strokeWidth="1.800" />)}
      {PV_DATES.map((d, i) => (
        <text key={d} x={83 + i * 129.900} y="612" fontSize="14.500" textAnchor="middle" textLength={d.length === 15 ? 117 : 125} lengthAdjust="spacingAndGlyphs" fill="#111">{d}</text>
      ))}
    </svg>
  );
}

const GLYPHS: Record<string, React.ReactNode> = {
  new: <path d="M2 .5h3l2 2v5H2z" fill="#fff" stroke="#9aa7b8" strokeWidth=".7" />,
  open: <><path d="M.5 2h3l1 1h3v4h-7z" fill="#e8a93a" /><path d="M1 7.200 2.300 4h5.400L6.500 7.200z" fill="#ffd76a" /><path d="M5 1.500h2v1" stroke="#3566a8" strokeWidth=".7" fill="none" /></>,
  close: <><path d="M.5 2h3l1 1h3v4.200h-7z" fill="#ffc84a" stroke="#b07a20" strokeWidth=".5" /><path d="M4.500.5h2v2" stroke="#3566a8" strokeWidth=".8" fill="none" /></>,
  save: <><rect x=".8" y=".8" width="6.400" height="6.400" fill="#2f4d9c" /><rect x="2" y="1" width="4" height="2.500" fill="#e6ecf8" /><rect x="2.300" y="4.800" width="3.400" height="2.400" fill="#cbd3e8" /></>,
  exit: <><rect x=".8" y=".8" width="6.400" height="6.400" rx="1" fill="#2a3f86" /><path d="M3 2h3v4H3z" fill="#b9c7e8" /><path d="M4.500 2.500v3" stroke="#2a3f86" /></>,
  undo: <path d="M2 1v3h3M2.300 4C4 1.500 7.500 3 5.500 7" stroke="#2457c5" strokeWidth="1.300" fill="none" />,
  copy: <path d="M1 1h3v4H1zM4 3.500h3v4H4z" fill="#eef3fb" stroke="#7087ad" strokeWidth=".7" />,
  paste: <><rect x="1" y="1" width="5" height="6" fill="#e0a03c" stroke="#8d5f1c" strokeWidth=".5" /><path d="M3.500 3.500h4v4h-4z" fill="#fff" stroke="#6780ac" strokeWidth=".6" /></>,
  list: <path d="M.8 1.800h1.500M.8 4h1.500M.8 6.200h1.500M3.300 1.800h4M3.300 4h4M3.300 6.200h4" stroke="#203f70" strokeWidth="1.100" />,
  chart: <><path d="M.8 7.200V2.500h2v4.700zM5.200 7.200V1h2v6.200z" fill="#333" /><path d="M3 7.200V.8h2v6.400z" fill="#b03030" /></>,
  sheet: <><rect x=".5" y=".8" width="5" height="4.500" fill="#5b6c8c" /><rect x="2" y="2.500" width="5.500" height="5" fill="#c8363a" /></>,
};

function Glyph({ name, className = "h-[7px] w-[7px]" }: { name: string; className?: string }) {
  return <svg className={clsx("shrink-0", className)} viewBox="0 0 8 8" fill="none">{GLYPHS[name]}</svg>;
}

function Cmd({ icon, children, dim }: { icon: string; children: React.ReactNode; dim?: boolean }) {
  return (
    <span className={clsx("flex h-[10.500px] items-center whitespace-nowrap", dim && "opacity-50")}>
      <Glyph name={icon} />
      {children}
    </span>
  );
}

function Ribbon() {
  const group = "flex flex-col border-r border-[#a9c5ea] bg-[linear-gradient(#dfeaf6,#c6d9f0_40%,#d9ecfc)]";
  const cap = "mt-auto flex h-[8px] items-center justify-center bg-[#bfd8f6] text-[5.700px] text-[#4a74b4]";
  return (
    <div className="flex h-[43px] shrink-0 items-stretch border-b border-[#8fb4e3] bg-[linear-gradient(#dbe7f4,#c6d9ef_30%,#d2e3f5_65%,#e1f3fe)] pb-[1px] pl-[2px] pt-[1px] text-[6px] tracking-[-0.150px] text-[#35599e]">
      <div className={clsx(group, "w-[97px]")}>
        <div className="flex pl-[3px] pt-px">
          <div className="w-[28px]"><Cmd icon="new" dim>New</Cmd><Cmd icon="open">Open</Cmd><Cmd icon="close">Close</Cmd></div>
          <div className="w-[32px] border-r border-[#a9c5ea]"><Cmd icon="save">Save</Cmd><Cmd icon="save">Save As</Cmd><Cmd icon="exit">Exit</Cmd></div>
          <div className="flex flex-col gap-[7px] pl-[3px] pt-[6px]">
            <span className="text-[#9aa9bf]">Import</span>
            <span>Export <span className="text-[4px]">▾</span></span>
          </div>
        </div>
        <div className={cap}>File</div>
      </div>
      <div className={clsx(group, "w-[27px]")}>
        <div className="pl-[1px] pt-px"><Cmd icon="undo">Undo</Cmd><Cmd icon="copy">Copy</Cmd><Cmd icon="paste">Paste</Cmd></div>
        <div className={cap}>Edit</div>
      </div>
      <div className={clsx(group, "w-[63px]")}>
        <div className="flex justify-between pl-[2px] pr-[3px] pt-px">
          <span className="flex h-[22px] items-center pt-[1px]"><Glyph name="list" />Overview</span>
          <span className="flex flex-col items-center pt-[5px] leading-[7px]">
            <Glyph name="chart" className="mb-[3px] h-[6px] w-[6px]" />
            <span>Show</span>
            <span className="whitespace-nowrap">Graph <span className="text-[4px]">▾</span></span>
          </span>
        </div>
        <div className={cap}>Graph</div>
      </div>
    </div>
  );
}

function ScrollArrow({ d }: { d: string }) {
  return (
    <svg className="h-[8px] w-[8px] shrink-0" viewBox="0 0 8 8" fill="none">
      <rect width="8" height="8" rx="1" fill="#c6d8fa" />
      <path d={d} stroke="#34548f" strokeWidth="1.200" />
    </svg>
  );
}

function PanelButton() {
  return (
    <svg className="h-[7px] w-[7px]" viewBox="0 0 7 7">
      <rect x=".5" y=".5" width="6" height="6" fill="#e9f0fa" stroke="#5d7cab" />
      <path d="M.5 1.500h6" stroke="#41628f" />
      <path d="M3.500 2.500 5 4.800H2z" fill="#223" />
    </svg>
  );
}

function ProTrackWindow() {
  return (
    <div className="absolute left-[820px] top-[73px] flex h-[387px] w-[580px] flex-col bg-[#bcd5f5] [font-family:'DejaVu_Sans_Condensed','Noto_Sans',sans-serif]">
      <div className="flex h-[15px] shrink-0 items-center border-t border-[#b4bfcd] bg-[linear-gradient(#dfe6ee,#e9eff6_60%,#dbe5f0)]">
        <div className="flex items-center gap-[3.500px] pl-[29px]">
          <Glyph name="new" /><Glyph name="open" /><Glyph name="save" /><Glyph name="exit" />
        </div>
        <span className="ml-[7px] w-[4px] text-[5px] text-[#444]">▾</span>
        <span className="ml-[53px] w-[408px] whitespace-nowrap text-[6.900px] font-bold tracking-[-0.260px] text-[#98a0aa]">
          C :/Develop/ProTrack Data/cases/Bermejo I Bridge - Case C.p2x - ProTrack - Smart version - Project
        </span>
        <svg className="h-[6px] w-[32px] shrink-0" viewBox="0 0 32 6" fill="none" stroke="#a0a8b3"><path d="M1 4.500h3M13 1.500h3.500M13 1v4M16.500 1v4M26 1l3 4M29 1l-3 4" strokeWidth=".8" /></svg>
      </div>
      <div className="flex h-[12px] shrink-0 items-end bg-[#bfd9fb] text-[6.200px] tracking-[-0.150px] text-[#35599e]">
        <span className="ml-[27px] flex h-[11px] w-[25px] items-center justify-center rounded-t-[2px] border border-b-0 border-[#9dbbe4] bg-[#e6f0fb]">Home</span>
        <span className="ml-[5px] w-[29px] pb-[2px]">Project</span>
        <span className="w-[29px] pb-[2px]">Analyse</span>
        <span className="w-[22px] pb-[2px]">View</span>
        <span className="pb-[2px]">Extra</span>
      </div>
      <svg className="absolute left-[4px] top-[2px] h-[22px] w-[22px]" viewBox="0 0 22 22">
        <defs>
          <radialGradient id="orb" cx=".5" cy=".3" r=".7"><stop offset="0" stopColor="#fff" /><stop offset=".6" stopColor="#d4dde9" /><stop offset="1" stopColor="#9fb0c8" /></radialGradient>
        </defs>
        <circle cx="11" cy="11" r="10" fill="url(#orb)" stroke="#8799b5" strokeWidth=".7" />
        <path d="M4.500 6.500h4.500c2.500 0 2.500 4-1 4h-1M7 7v7M11 9h7M14.500 6v8c0 2.500 2 2.500 2.500 1" fill="none" stroke="#5d88c4" strokeWidth="1" />
      </svg>
      <Ribbon />
      <div className="ml-[2px] flex h-[13px] shrink-0 items-center border-t border-[#f8f6ec] bg-[#ebe8d7] text-[5.200px] tracking-[-0.050px] text-[#222]">
        <Glyph name="sheet" className="ml-[2px] h-[5px] w-[5px]" />
        <span className="ml-[1px] w-[20px]">Baseline</span>
        <div className="ml-[13px]"><PanelButton /></div>
        <div className="ml-auto flex gap-[4px] pr-[3px]">
          <PanelButton />
          <Glyph name="new" />
        </div>
      </div>
      <div className="ml-[2px] flex h-[10px] shrink-0 items-center border border-[#d5d2c3] bg-[#f6f5f0] pl-[2px] text-[4px] text-[#222]">Gantt</div>
      <div className="ml-[2px] flex h-[156px] shrink-0 overflow-hidden bg-[#ece9d8]">
        <TaskTable />
        <div className="flex w-[10px] shrink-0 flex-col items-center bg-[#eef2fb]">
          <ScrollArrow d="m2 5 2-2 2 2" />
          <div className="mb-auto h-[30px] w-[8px] rounded-[1px] bg-[#c3d6fb]" />
          <ScrollArrow d="m2 3 2 2 2-2" />
        </div>
        <div className="flex w-[229px] flex-col">
          <Gantt />
          <div className="flex h-[8px] items-center bg-[#474747] pl-[52px] pr-[5px] text-white">
            <span className="w-[92px] whitespace-nowrap text-[7px] font-bold">ESS/LSS Percentage: 0%</span>
            <span className="flex h-[4px] flex-1 overflow-hidden rounded-full bg-white"><span className="w-[4px] bg-[#0a7d0a]" /></span>
          </div>
          <div className="flex h-[9px] items-center bg-[#eef2fb]">
            <ScrollArrow d="m5 2-2 2 2 2" />
            <div className="ml-px mr-auto h-[7px] w-[92px] rounded-[1px] bg-[#c3d6fb]" />
            <ScrollArrow d="m3 2 2 2-2 2" />
          </div>
        </div>
      </div>
      <div className="ml-[2px] flex h-[10px] shrink-0 items-center justify-end gap-[2px] border-y border-[#d5d2c3] bg-[#f6f5f0] pr-[4px]">
        <svg className="h-[5px] w-[4px]" viewBox="0 0 4 5"><path d="M1 0h2v2h1v1H0V2h1zM1.600 3h.8v2h-.8z" fill="#3565b5" /></svg>
        <svg className="h-[5px] w-[5px]" viewBox="0 0 5 5"><rect width="5" height="5" rx="1" fill="#e2552c" /><path d="m1.500 1.500 2 2m0-2-2 2" stroke="#fff" strokeWidth=".8" /></svg>
      </div>
      <div className="ml-[2px] h-[17px] shrink-0 bg-[#ece9d8] pt-[2px]">
        <div className="h-[10px] w-[199px] bg-[linear-gradient(#fbfaf4,#cfcba6)]" />
      </div>
      <PvCurve />
      <div className="ml-[2px] h-[13px] shrink-0 border-t-2 border-[#d6d3c5] bg-[#f4f3ee]" />
      <div className="flex min-h-0 flex-1 items-center bg-[linear-gradient(#d9e8fb,#b4cff4_50%,#bdd7f9)] text-[6px] tracking-[-0.100px] text-[#2f5494]">
        <Glyph name="exit" className="ml-[353px] h-[6px] w-[6px]" />
        <span className="ml-[2px] w-[3px] text-[4px]">▾</span>
        <span className="ml-[6px] flex h-[10px] w-[61px] items-center justify-end border border-[#b8cfee] bg-[#eaf3fd] pr-[1px] text-[3px]">▾</span>
        <span className="ml-[5px] w-[3px] text-[4px] text-[#3b7d2b]">▸</span>
        <span className="ml-[4px] w-[62px] whitespace-nowrap">Screenshot (1440x960)</span>
        <div className="grid grid-cols-[17px_17px_17.500px_12px] border-l border-[#9dbbe4] pl-[1px] tracking-[-0.200px] text-[#a4b8d3]">
          <span>CAPS</span><span className="text-[#2f5494]">NUM</span><span>SCRL</span><span>INS</span>
        </div>
        <svg className="ml-auto h-[7px] w-[7px] self-end" viewBox="0 0 7 7"><path d="M7 0v7H0z" fill="#6f93c6" /></svg>
      </div>
    </div>
  );
}

/* ------------------------------------------------------------------ */
/* PMConverter dialog                                                  */
/* ------------------------------------------------------------------ */

function Combo({ value }: { value: string }) {
  return (
    <div className="flex h-[13px] w-[60px] items-center justify-between border border-[#b0b0b0] bg-[linear-gradient(#f0f0f0,#e5e5e5)] pl-[2px] pr-[3px]">
      <span>{value}</span>
      <svg className="h-[3px] w-[5px]" viewBox="0 0 5 3"><path d="M0 0h5L2.500 3z" fill="#111" /></svg>
    </div>
  );
}

function ConverterDialog() {
  return (
    <div className="absolute left-[529px] top-[237px] flex h-[363px] w-[418px] flex-col border-b border-l-2 border-b-[#8fa9cb] border-l-[#7f9fc8] bg-[#a9c4e9] pb-[4px] pl-[4px] pr-[2px]">
      <div className="flex h-[18px] shrink-0 items-start">
        <svg className="ml-[2px] mt-[4px] h-[9px] w-[9px]" viewBox="0 0 9 9" fill="none" strokeWidth="1.900">
          <path d="M4.500 1.200 7.200 3" stroke="#f0d81c" />
          <path d="M7.200 2.500v3" stroke="#a8c820" />
          <path d="M7.300 5 5 7.500" stroke="#8c3c9c" />
          <path d="M5.200 7.500 2 6.500" stroke="#b02890" />
          <path d="M2 6.800V3.500" stroke="#28a8dc" />
          <path d="M1.800 4 4.600 1.300" stroke="#48b890" />
        </svg>
        <span className="flex-1 pl-[29px] pt-[2px] text-center text-[8.600px] leading-[14px] tracking-[-0.180px] text-[#3a3f47]">PMConverter</span>
        <span className="w-[11px] pt-[1px] text-[8.500px] font-bold leading-[12px] text-[#222]">?</span>
        <span className="flex h-[13px] w-[27px] items-center justify-center bg-[#c75050] pt-px">
          <svg className="h-[5px] w-[5px]" viewBox="0 0 5 5" stroke="#fff" strokeWidth="1.200"><path d="m.5.5 4 4m0-4-4 4" /></svg>
        </span>
      </div>
      <div className="flex min-h-0 flex-1 flex-col border border-[#98b4da] bg-[#f0f0f0] pl-[12px] pr-[11px] text-[7.600px] text-[#222] [font-family:'DejaVu_Sans_Condensed','Noto_Sans',sans-serif]">
        <h1 className="mt-[12px] text-[15.600px] leading-[22px] text-black">Step 1: Select a file...</h1>
        <div className="mt-px h-px bg-[#bdbdbd]" />
        <div className="mt-[98.500px] grid grid-cols-[105px_179px_47px] items-center gap-x-[5px] gap-y-[5.500px] leading-[10px]">
          <span className="pt-px text-right">I want to convert:</span>
          <div className="ml-[2px] flex h-[15px] w-[179px] items-center border border-[#a8a8a8] bg-white pl-[2px]">C2011-12 Claeys-Verhelst Premises</div>
          <button className="ml-px flex h-[14px] w-[47px] items-center justify-center border border-[#b0b0b0] bg-[linear-gradient(#f0f0f0,#e5e5e5)]">File...</button>
          <span className="pt-[3px] text-right">From:</span>
          <div className="col-span-2 ml-[2px]"><Combo value="ProTrack" /></div>
          <span className="pt-[3px] text-right">To:</span>
          <div className="col-span-2 ml-[2px]"><Combo value="Excel" /></div>
          <span />
          <div className="col-span-2 ml-[2px] flex h-[13px] items-center gap-[3px]">
            <svg className="h-[8px] w-[8px]" viewBox="0 0 8 8"><rect x=".5" y=".5" width="7" height="7" fill="#fff" stroke="#888" /><path d="M2 4l1.500 1.700L6.200 2" fill="none" stroke="#111" strokeWidth="1.200" /></svg>
            <span>Extended version</span>
          </div>
        </div>
        <button className="mb-[11px] ml-auto mt-auto flex h-[25px] w-[59px] items-center rounded-[2px] border border-[#cde8f2] pl-[4px] text-[9.300px] text-[#2b2f6a] [font-family:'Open_Sans',sans-serif]">
          <svg className="mr-[6px] h-[8px] w-[8px]" viewBox="0 0 8 8"><path d="M0 3h4V.6L7.800 4 4 7.400V5H0z" fill="#14a824" /></svg>
          Next
        </button>
      </div>
    </div>
  );
}

export default function App() {
  return (
    <main className="relative h-[600px] w-[1400px] overflow-hidden bg-white leading-none [font-family:'Open_Sans',sans-serif]">
      <OverviewWindow />
      <ResourceWindow />
      <RiskWindow />
      <ProTrackWindow />
      <ConverterDialog />
    </main>
  );
}
